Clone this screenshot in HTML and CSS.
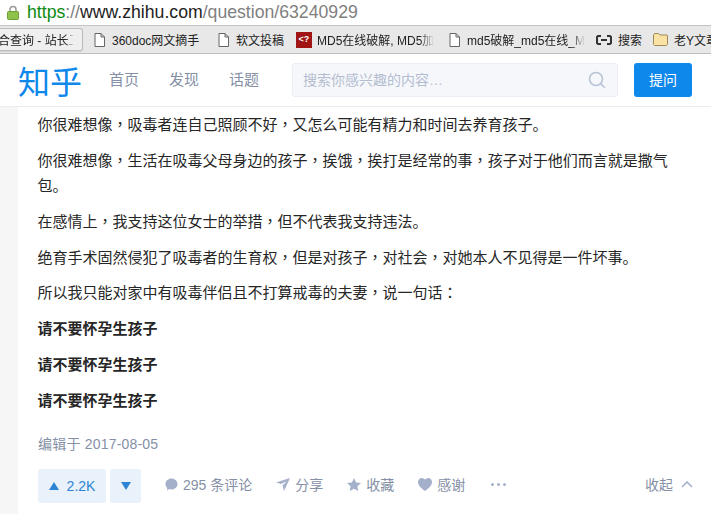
FILE: index.html
```html
<!DOCTYPE html>
<html lang="zh-CN">
<head>
  <meta charset="UTF-8" />
  <title>知乎</title>
  <link rel="stylesheet" href="styles.css">
</head>
<body>
  <div class="address-bar">
    <svg class="lock" width="12" height="15" viewBox="0 0 12 15">
      <path d="M3 7V4.500a3 3 0 0 1 6 0V7" fill="none" stroke="#9a9a9a" stroke-width="1.500"/>
      <rect x="0.500" y="6.500" width="11" height="8" rx="1" fill="#8fc24a" stroke="#6f9f35"/>
    </svg>
    <div class="url"><span class="url-https">https</span><span class="url-rest">://</span><span class="url-host">www.zhihu.com</span><span class="url-rest">/question/63240929</span></div>
  </div>

  <div class="bookmarks">
    <div class="bookmark bookmark-active"><span class="bookmark-text fade first-tab">合查询 - 站长工</span></div>
    <div class="bookmark bm-360">
      <svg class="doc" width="11" height="14" viewBox="0 0 11 14"><path d="M1 .5h6l3.500 3.500v9.500H1zM7 .5V4h3.500" fill="#fff" stroke="#666"/></svg>
      <span class="bookmark-text">360doc网文摘手</span>
    </div>
    <div class="bookmark bm-soft">
      <svg class="doc" width="11" height="14" viewBox="0 0 11 14"><path d="M1 .5h6l3.500 3.500v9.500H1zM7 .5V4h3.500" fill="#fff" stroke="#666"/></svg>
      <span class="bookmark-text">软文投稿</span>
    </div>
    <div class="bookmark bm-md5">
      <span class="red-icon">&lt;?</span>
      <span class="bookmark-text fade">MD5在线破解, MD5加</span>
    </div>
    <div class="bookmark bm-md5b">
      <svg class="doc" width="11" height="14" viewBox="0 0 11 14"><path d="M1 .5h6l3.500 3.500v9.500H1zM7 .5V4h3.500" fill="#fff" stroke="#666"/></svg>
      <span class="bookmark-text fade">md5破解_md5在线_M</span>
    </div>
    <div class="bookmark bm-search">
      <svg width="16" height="10" viewBox="0 0 16 10"><path d="M5 1H2L1 2v6l1 1h3M11 1h3l1 1v6l-1 1h-3M5 5h6" fill="none" stroke="#333" stroke-width="2"/></svg>
      <span class="bookmark-text">搜索</span>
    </div>
    <div class="bookmark bm-folder">
      <svg width="15" height="13" viewBox="0 0 15 13"><path d="M.5 2 1.500.5h4L7 2h7l.5 1v8.500l-1 1h-12l-1-1z" fill="#fbe3a6" stroke="#a08a55"/></svg>
      <span class="bookmark-text">老Y文章</span>
    </div>
  </div>

  <header class="site-header">
    <div class="logo">知乎</div>
    <nav class="nav">
      <a>首页</a>
      <a>发现</a>
      <a>话题</a>
    </nav>
    <div class="search">
      <span class="search-text">搜索你感兴趣的内容…</span>
      <svg width="18" height="18" viewBox="0 0 18 18"><circle cx="8" cy="8" r="6.500" fill="none" stroke="#b8c4d6" stroke-width="1.600"/><path d="m12.800 12.800 4 4" stroke="#b8c4d6" stroke-width="1.600"/></svg>
    </div>
    <button class="ask">提问</button>
  </header>

  <main class="card">
    <div class="content">
      <p>你很难想像<span class="mid" lang="zh-TW">，</span>吸毒者连自己照顾不好<span class="mid" lang="zh-TW">，</span>又怎么可能有精力和时间去养育孩子。</p>
      <p>你很难想像<span class="mid" lang="zh-TW">，</span>生活在吸毒父母身边的孩子<span class="mid" lang="zh-TW">，</span>挨饿<span class="mid" lang="zh-TW">，</span>挨打是经常的事<span class="mid" lang="zh-TW">，</span>孩子对于他们而言就是撒气包。</p>
      <p>在感情上<span class="mid" lang="zh-TW">，</span>我支持这位女士的举措<span class="mid" lang="zh-TW">，</span>但不代表我支持违法。</p>
      <p>绝育手术固然侵犯了吸毒者的生育权<span class="mid" lang="zh-TW">，</span>但是对孩子<span class="mid" lang="zh-TW">，</span>对社会<span class="mid" lang="zh-TW">，</span>对她本人不见得是一件坏事。</p>
      <p>所以我只能对家中有吸毒伴侣且不打算戒毒的夫妻<span class="mid" lang="zh-TW">，</span>说一句话<span class="mid" lang="zh-TW">：</span></p>
      <p><b>请不要怀孕生孩子</b></p>
      <p><b>请不要怀孕生孩子</b></p>
      <p><b>请不要怀孕生孩子</b></p>
    </div>
    <div class="edited">编辑于 2017-08-05</div>
    <div class="actions">
      <button class="vote vote-up">
        <svg width="10" height="8" viewBox="0 0 10 8"><path d="M5 0l5 8H0z" fill="#2d84d4"/></svg>
        2.2K
      </button>
      <button class="vote vote-down">
        <svg width="10" height="8" viewBox="0 0 10 8"><path d="M0 0h10L5 8z" fill="#2d84d4"/></svg>
      </button>
      <span class="action act-comment">
        <svg width="13" height="13" viewBox="0 0 13 13"><path d="M6.500.5c3.300 0 6 2.400 6 5.500s-2.700 5.500-6 5.500c-.8 0-1.500-.1-2.200-.4L2 12.500l.3-2.500C1.100 9 .5 7.600.5 6 .5 2.900 3.200.5 6.500.5z" fill="#a4b0ca"/></svg>
        295 条评论
      </span>
      <span class="action act-share">
        <svg width="14" height="13" viewBox="0 0 14 13"><path d="M0 4.500 14 0 8 13 6.500 7.500 11 3 5 6z" fill="#a4b0ca"/></svg>
        分享
      </span>
      <span class="action act-fav">
        <svg width="14" height="13" viewBox="0 0 14 13"><path d="m7 0 2.100 4.400 4.900.6-3.600 3.300.9 4.700L7 10.700 2.700 13l.9-4.700L0 5l4.900-.6z" fill="#a4b0ca"/></svg>
        收藏
      </span>
      <span class="action act-thanks">
        <svg width="14" height="13" viewBox="0 0 14 13"><path d="M7 13C3 10 0 7.500 0 4 0 1.700 1.700 0 3.800 0 5.100 0 6.300.7 7 1.800 7.700.7 8.900 0 10.200 0 12.300 0 14 1.700 14 4c0 3.500-3 6-7 9z" fill="#a4b0ca"/></svg>
        感谢
      </span>
      <span class="more"><i></i><i></i><i></i></span>
      <span class="collapse">
        收起
        <svg width="12" height="7" viewBox="0 0 12 7"><path d="M1 6l5-5 5 5" fill="none" stroke="#a4b0ca" stroke-width="1.500"/></svg>
      </span>
    </div>
  </main>
</body>
</html>
```

FILE: styles.css
```css
* {
  margin: 0;
  padding: 0;
  box-sizing: border-box;
}
body {
  width: 711px;
  height: 514px;
  overflow: hidden;
  background-color: #f6f6f6;
  font-family: "Liberation Sans", "Noto Sans CJK SC", sans-serif;
  color: #262626;
}

/* browser bars */
.address-bar {
  height: 26px;
  display: flex;
  align-items: center;
  gap: 8px;
  padding-left: 7px;
  background-color: #fff;
  border-bottom: 1px solid #c4c4c4;
}
.url {
  font-size: 17.660px;
  white-space: nowrap;
}
.url-https {
  color: #0b8a12;
}
.url-host {
  color: #222;
}
.url-rest {
  color: #808080;
}
.bookmarks {
  height: 28px;
  display: flex;
  align-items: center;
  overflow: hidden;
  background-color: #e8e8e8;
  border-bottom: 1px solid #bdbdbd;
}
.bookmark {
  flex: none;
  display: flex;
  align-items: center;
  gap: 7px;
  height: 100%;
  font-size: 12px;
  color: #222;
  white-space: nowrap;
  overflow: hidden;
}
.bookmark-text {
  flex: none;
}
.fade {
  -webkit-mask-image: linear-gradient(to right, #000 88%, transparent 100%);
  mask-image: linear-gradient(to right, #000 88%, transparent 100%);
}
.first-tab {
  width: 76px;
  margin-left: -2px;
  overflow: hidden;
}
.doc {
  flex: none;
}
.bookmark-active {
  width: 83px;
  height: 23px;
  background-color: #efefef;
  border: 1px solid #bcbcbc;
  border-left: none;
  border-radius: 0 3px 3px 0;
  box-shadow: 0 1px 1px rgba(0, 0, 0, 0.1);
}
.bm-360 {
  width: 135px;
  padding-left: 11px;
}
.bm-soft {
  width: 78px;
}
.red-icon {
  flex: none;
  width: 16px;
  height: 16px;
  background-color: #a01414;
  color: #fff;
  font-size: 9px;
  font-weight: bold;
  line-height: 15px;
  text-align: center;
}
.bm-md5 {
  width: 153px;
  gap: 5px;
}
.bm-md5b {
  width: 147px;
}
.bm-search {
  width: 57px;
  gap: 6px;
}
.bm-folder {
  gap: 6px;
}

/* site header */
.site-header {
  height: 53px;
  display: flex;
  align-items: center;
  padding: 0 19px 0 18px;
  background-color: #fff;
  border-bottom: 1px solid #ebebeb;
}
.logo {
  width: 91px;
  font-family: "Noto Sans CJK SC", sans-serif;
  font-size: 32px;
  line-height: 36px;
  color: #0f88eb;
}
.nav {
  display: flex;
  gap: 30px;
  width: 183px;
  padding-bottom: 3px;
  font-size: 15px;
  color: #8590a6;
}
.search {
  width: 326px;
  height: 34px;
  display: flex;
  align-items: center;
  justify-content: space-between;
  padding: 0 11px 0 10px;
  background-color: #f6f7fb;
  border: 1px solid #ebeef5;
  border-radius: 3px;
  font-size: 14px;
  color: #b3bdd0;
}
.search-text {
  padding-bottom: 2px;
}
.ask {
  width: 58px;
  height: 34px;
  margin-left: 16px;
  padding-bottom: 2px;
  border: none;
  border-radius: 3px;
  background-color: #0f88eb;
  color: #fff;
  font-family: inherit;
  font-size: 14px;
}

/* answer */
.card {
  height: 407px;
  margin-left: 18px;
  padding: 5px 18px 0 20px;
  background-color: #fff;
}
.content {
  width: 633px;
  margin-left: -0.500px;
  font-size: 15px;
  line-height: 25px;
}
.content p {
  margin-bottom: 10.850px;
}
.mid {
  font-family: "Noto Sans CJK TC", sans-serif;
  line-height: 0;
}
.edited {
  margin-top: 21.200px;
  font-size: 14px;
  line-height: 20px;
  letter-spacing: 0.200px;
  color: #8590a6;
}
.actions {
  display: flex;
  align-items: center;
  margin-top: 15px;
  font-size: 14px;
  color: #8590a6;
}
.vote {
  display: flex;
  align-items: center;
  justify-content: center;
  gap: 8px;
  height: 34px;
  border: none;
  border-radius: 3px;
  background-color: #e9f2fb;
  color: #2d84d4;
  font-family: inherit;
  font-size: 14px;
}
.vote-up {
  width: 68px;
}
.vote-down {
  width: 31px;
  margin-left: 4px;
}
.action {
  display: flex;
  align-items: center;
  gap: 5px;
  padding-bottom: 4px;
}
.act-comment,
.act-share,
.act-fav,
.act-thanks {
  margin-left: 24px;
}
.more {
  display: flex;
  gap: 3px;
  margin-left: 26px;
  padding-bottom: 4px;
}
.more i {
  width: 3px;
  height: 3px;
  border-radius: 50%;
  background-color: #a4b0ca;
}
.collapse {
  display: flex;
  align-items: center;
  gap: 8px;
  margin-left: auto;
  padding-bottom: 4px;
}
```
